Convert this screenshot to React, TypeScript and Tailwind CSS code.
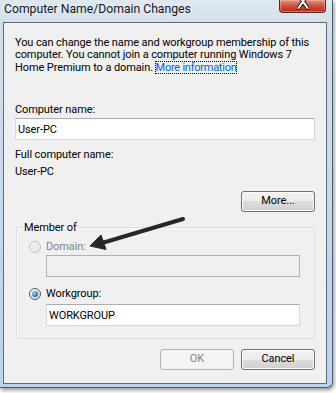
import React from "react";

function Radio({ checked, disabled }: { checked?: boolean; disabled?: boolean }) {
  if (disabled) {
    return (
      <span className="h-[12px] w-[12px] shrink-0 rounded-full border border-[#c4c4c4] bg-[linear-gradient(135deg,#f7f7f7,#e3e3e3)]" />
    );
  }
  return (
    <span className="flex h-[12px] w-[12px] shrink-0 items-center justify-center rounded-full border border-[#4e5a66] bg-[linear-gradient(135deg,#ffffff,#d2d2d2)]">
      {checked && (
        <span className="h-[6px] w-[6px] rounded-full bg-[radial-gradient(circle_at_35%_35%,#9ad6ff,#1c62a8_75%)]" />
      )}
    </span>
  );
}

function Button({ label, disabled }: { label: string; disabled?: boolean }) {
  return (
    <button
      className={
        disabled
          ? "h-[21px] w-[74px] rounded-[3px] border border-[#adb2b5] bg-[#f4f4f4] text-[#838383]"
          : "h-[21px] w-[74px] rounded-[3px] border border-[#707070] bg-[linear-gradient(#f2f2f2_0%,#ebebeb_50%,#dddddd_50%,#cfcfcf_100%)] text-black shadow-[inset_0_0_0_1px_#fcfcfc]"
      }
    >
      {label}
    </button>
  );
}

export default function App() {
  return (
    <div className="relative h-[393px] w-[336px] overflow-hidden bg-white font-['Roboto',sans-serif] text-[11px] tracking-[-0.1px] text-black">
      {/* Window frame */}
      <div className="flex h-[388px] w-[333px] flex-col rounded-br-[6px] border-r border-b border-[#4d5d70] bg-[linear-gradient(180deg,#dfe7ef_0px,#d3dfeb_22px,#bad2ec_100%)] shadow-[1px_2px_4px_rgba(0,0,0,0.45)]">
        {/* Title bar */}
        <div className="flex h-[22px] shrink-0 items-start justify-between">
          <span className="pl-[4px] pt-[1.5px] text-[12.2px] leading-[14px] tracking-normal text-[#111827] [text-shadow:0_0_6px_#ffffff]">
            Computer Name/Domain Changes
          </span>
          <div className="relative mr-[6px] h-[13px] w-[47px] overflow-hidden rounded-b-[4px] border border-t-0 border-[#5e2620] bg-[linear-gradient(180deg,#e29a8e_0%,#d4624f_35%,#c53d2b_70%,#b5301e_100%)] shadow-[inset_0_0_0_1px_rgba(255,190,180,0.45)]">
            <svg className="absolute left-[17px] top-0" width="12" height="10" viewBox="0 0 12 10">
              <path d="M1.5 -5 L10.5 8 M10.5 -5 L1.5 8" stroke="#3b1812" strokeWidth="4" strokeLinecap="round" />
              <path d="M1.5 -5 L10.5 8 M10.5 -5 L1.5 8" stroke="#ffffff" strokeWidth="2" strokeLinecap="round" />
            </svg>
          </div>
        </div>

        {/* Client area */}
        <div className="mb-[3px] ml-[3px] mr-[5px] flex flex-1 flex-col border border-[#5f6b79] bg-[#f0f0f0] px-[11px] pt-[13.5px]">
          <p className="leading-[12.5px]">
            You can change the name and workgroup membership of this computer. You cannot join a computer running Windows 7 Home Premium to a domain.{" "}
            <span className="inline-block leading-[11px] tracking-[-0.25px] text-[#0066cc] outline-1 outline-offset-0 outline-dotted outline-black">
              More information
            </span>
          </p>

          <div className="mt-[28.5px] h-[13px] leading-[13px]">Computer name:</div>
          <input
            readOnly
            value="User-PC"
            className="mt-[2.5px] h-[22px] w-full border border-[#d5d8de] border-t-[#abadb3] bg-white px-[2px] leading-[13px] outline-none"
          />

          <div className="mt-[8px] h-[13px] leading-[13px]">Full computer name:</div>
          <div className="mt-[4px] h-[13px] leading-[13px]">User-PC</div>

          <div className="mt-[13px] flex justify-end">
            <Button label="More..." />
          </div>

          <fieldset className="ml-[1px] mt-[9px] rounded-[3px] border border-[#d5dfe5] shadow-[inset_1px_1px_0_#ffffff]">
            <legend className="ml-[6px] px-[1px] leading-[13px]">Member of</legend>
            <div className="pb-[12px] pl-[12px] pr-[14px] pt-[6px]">
              <div className="flex h-[13px] items-center gap-[5px] leading-[13px] text-[#838383]">
                <Radio disabled />
                <span>Domain:</span>
              </div>
              <div className="ml-[17px] mt-[2px] h-[22px] border border-[#adb2b5] bg-[#f0f0f0]" />

              <div className="mt-[10px] flex h-[13px] items-center gap-[5px] leading-[13px]">
                <Radio checked />
                <span>Workgroup:</span>
              </div>
              <input
                readOnly
                value="WORKGROUP"
                className="ml-[17px] mt-[4px] block h-[22px] w-[254px] border border-[#d5d8de] border-t-[#abadb3] bg-white px-[2px] leading-[13px] outline-none"
              />
            </div>
          </fieldset>

          <div className="mt-[10px] flex justify-end gap-[7px]">
            <Button label="OK" disabled />
            <Button label="Cancel" />
          </div>
        </div>
      </div>

      {/* Annotation arrow */}
      <svg className="pointer-events-none absolute left-0 top-0" width="336" height="393" viewBox="0 0 336 393">
        <path d="M183 219 L102 243" stroke="#262626" strokeWidth="4" strokeLinecap="round" />
        <polygon points="90,246 101,235 106,249.5" fill="#262626" stroke="#262626" strokeWidth="1" strokeLinejoin="round" />
      </svg>
    </div>
  );
}
